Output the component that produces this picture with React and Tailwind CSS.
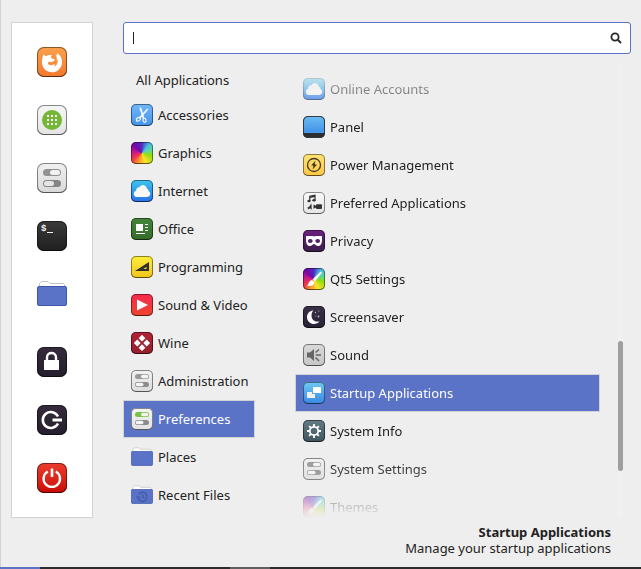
import clsx from "clsx";

const RAINBOW =
  "bg-[conic-gradient(from_0deg,#4f2cc0_0deg,#48bfe0_40deg,#5cd8a0_70deg,#8fdd10_105deg,#ffe32a_160deg,#ff9a28_200deg,#f03a48_235deg,#cc1a88_275deg,#7206a8_315deg,#4f2cc0_360deg)]";

function Tile({ tone, large, children }) {
  return (
    <span
      aria-hidden="true"
      className={clsx(
        "block shrink-0 overflow-hidden shadow-[inset_0_0_0_1px_rgba(0,0,0,0.45),inset_0_-1px_0_0_rgba(0,0,0,0.3)]",
        large ? "size-[30px] rounded-[7px]" : "size-[22px] rounded-[5px]",
        tone
      )}
    >
      <svg viewBox={large ? "0 0 30 30" : "0 0 22 22"} className="size-full" fill="none">
        {children}
      </svg>
    </span>
  );
}

function FolderIcon({ large, recent }) {
  return (
    <svg
      aria-hidden="true"
      viewBox="0 0 30 30"
      fill="none"
      className={clsx("shrink-0", large ? "size-[30px]" : "size-[22px]")}
    >
      <path d="M2.5 8V4.5L4.5 2.5H11L13 4.5H26.5L27.5 5.5V9" fill="#fff" stroke="#c3c3c3" />
      <rect x="0.5" y="7.5" width="29" height="19" rx="1.5" fill="#5a73c6" stroke="#3e57ae" />
      {recent && (
        <g stroke="#4259a8" strokeWidth="1.8">
          <path d="M10.5 14A6.2 6.2 0 1 1 9.600 18.500" />
          <path d="M16 13.500v4l2.500 2" />
          <path d="M7.500 16.500l2.300 2.500 2.700-2" />
        </g>
      )}
    </svg>
  );
}

function Toggles({ top }) {
  return (
    <>
      <rect x="4" y="4" width="14" height="5" rx="2.5" fill={top} />
      <rect x="10" y="4.7" width="7.3" height="3.6" rx="1.8" fill="#f4f4f4" />
      <rect x="4" y="12" width="14" height="5" rx="2.5" fill="#8c8c8c" />
      <rect x="4.7" y="12.7" width="7.8" height="3.6" rx="1.8" fill="#f4f4f4" />
    </>
  );
}

const CLOUD =
  "M6 17C3.8 17 2.8 15.6 2.8 13.8C2.8 12.1 4 11 5.2 10.8C4.8 8.4 6.6 7 8.4 7.2C9.4 5.4 11.3 4.8 13 5.2C15 5.7 15.9 7.2 15.8 8.8C17 8.8 17.6 9.9 17.4 10.9C18.8 11.4 19.3 12.5 19.2 13.8C19.1 15.8 17.8 17 16 17Z";

const Brush = () => (
  <>
    <path d="M17.8 3.5L19 4.7L12 13.2L9.6 11.2Z" fill="#fff" />
    <path d="M9 11.9L11.3 13.9C11.5 16.8 8.5 18.7 4 17.8C5.9 16.8 5.4 12.6 9 11.9Z" fill="#fff" />
  </>
);

const ICONS = {
  accessories: (
    <Tile tone="bg-linear-to-b from-[#71b7fb] to-[#4492ea]">
      <path d="M8.300 3.500L10.200 3.800L13.300 14L11.800 14.500Z" fill="#fff" />
      <path d="M16.500 4.200L17 5.800L9.300 14.500L8 13.500Z" fill="#fff" />
      <ellipse cx="7.300" cy="15.300" rx="2.200" ry="1.600" transform="rotate(-35 7.300 15.300)" stroke="#fff" strokeWidth="1.100" />
      <ellipse cx="13.500" cy="16.300" rx="1.500" ry="2.100" transform="rotate(-15 13.500 16.300)" stroke="#fff" strokeWidth="1.100" />
    </Tile>
  ),
  graphics: <Tile tone={RAINBOW} />,
  internet: (
    <Tile tone="bg-linear-to-b from-[#3ec5ee] to-[#2c6fe9]">
      <path d={CLOUD} fill="#f7f7f7" />
    </Tile>
  ),
  office: (
    <Tile tone="bg-linear-to-b from-[#45853a] to-[#346b2b]">
      <path d="M5 6h7v7H5zM14 6h3v1h-3zM14 9h3v1h-3zM14 12h3v1h-3zM5 15h9v1H5z" fill="#fff" />
    </Tile>
  ),
  programming: (
    <Tile tone="bg-linear-to-b from-[#fdee39] to-[#f0c51e]">
      <path fillRule="evenodd" d="M18 6V15H4ZM15.5 10.8L12.3 12.9H15.5Z" fill="#2f2f2f" />
    </Tile>
  ),
  media: (
    <Tile tone="bg-linear-to-b from-[#f6274f] to-[#ed4528]">
      <path d="M6 5.5L17 11L6 16.5Z" fill="#fff" />
    </Tile>
  ),
  wine: (
    <Tile tone="bg-linear-to-b from-[#b02436] to-[#941f2e]">
      <path
        d="M11 2.8L14.4 6.2L11 9.6L7.6 6.2ZM6.3 7.6L9.7 11L6.3 14.4L2.9 11ZM15.7 7.6L19.1 11L15.7 14.4L12.3 11ZM11 12.3L14.4 15.7L11 19.1L7.6 15.7Z"
        fill="#fff"
      />
    </Tile>
  ),
  admin: (
    <Tile tone="bg-linear-to-b from-[#f2f2f2] to-[#dcdcdc]">
      <Toggles top="#9a9a9a" />
    </Tile>
  ),
  preferences: (
    <Tile tone="bg-linear-to-b from-[#f5f5f5] to-[#e2e2e2]">
      <Toggles top="#79c142" />
    </Tile>
  ),
  places: <FolderIcon />,
  recent: <FolderIcon recent />,
  panel: (
    <Tile tone="bg-linear-to-b from-[#6bbcf2] to-[#3483e5]">
      <path d="M0 17h22v5H0z" fill="#2d2d2d" />
      <path d="M1 16.5h20" stroke="#45a0f5" />
      <rect x="0.5" y="0.5" width="21" height="21" rx="4.5" stroke="#32383f" />
    </Tile>
  ),
  power: (
    <Tile tone="bg-linear-to-b from-[#ffe373] to-[#fdc643]">
      <circle cx="11" cy="11" r="6.5" stroke="#453a22" strokeWidth="1.3" />
      <path d="M12.6 6.5L8.2 11.5H10.6L9.6 15.5L14 10.4H11.5Z" fill="#33301f" />
    </Tile>
  ),
  preferred: (
    <Tile tone="bg-linear-to-b from-[#fafafa] to-[#e4e4e4]">
      <path d="M6.8 9V4.2L12 3.2V8" stroke="#333" strokeWidth="1.2" />
      <path d="M6.8 5.2L12 4.2" stroke="#333" strokeWidth="1.4" />
      <ellipse cx="6" cy="9" rx="1.7" ry="1.3" fill="#333" />
      <ellipse cx="11" cy="8.2" rx="1.7" ry="1.3" fill="#333" />
      <path d="M8.4 11.3L8.8 17.8L7 16.2L5.6 17.5L4.3 15.8L6.3 14.4Z" fill="#333" />
      <rect x="13" y="12.3" width="6" height="4.6" rx="1" fill="#333" />
      <path d="M10.5 12.4L13.3 14L13.3 15.4L10.5 16.8Z" fill="#333" />
    </Tile>
  ),
  privacy: (
    <Tile tone="bg-linear-to-b from-[#6d2181] to-[#3a1d4a]">
      <path
        fillRule="evenodd"
        d="M4 6H9.500L11 6.600L12.500 6H18C18.700 6 19 6.400 19 7V9.500C19 13.500 17.800 16 15.200 16C13 16 12 14 11 14C10 14 9 16 6.800 16C4.200 16 3 13.500 3 9.500V7C3 6.400 3.300 6 4 6ZM7.300 9C5.800 9 5 9.800 5 10.900C5 12 5.900 12.900 7.300 12.900C8.700 12.900 9.600 12 9.600 10.900C9.600 9.800 8.800 9 7.300 9ZM14.700 9C13.200 9 12.400 9.800 12.400 10.900C12.400 12 13.300 12.900 14.700 12.900C16.100 12.900 17 12 17 10.900C17 9.800 16.200 9 14.700 9Z"
        fill="#fff"
      />
    </Tile>
  ),
  brush: (
    <Tile tone={RAINBOW}>
      <Brush />
    </Tile>
  ),
  screensaver: (
    <Tile tone="bg-linear-to-b from-[#3a3048] to-[#292335]">
      <path d="M10.5 4.2C5.8 5 3.8 8.2 4 11.5C4.3 15.5 7.4 18 11 18C13.3 18 15.2 17 16.5 15.3C12 16.3 9 14 8.6 10.5C8.3 8 9 5.6 10.5 4.2Z" fill="#fff" />
      <g fill="#bdb8c8">
        <circle cx="12.5" cy="6.5" r="0.7" />
        <circle cx="15.8" cy="5" r="0.6" />
        <circle cx="15.5" cy="10.5" r="0.9" />
        <circle cx="12.8" cy="10" r="0.5" />
      </g>
    </Tile>
  ),
  sound: (
    <Tile tone="bg-linear-to-b from-[#dadada] to-[#c6c6c6]">
      <path d="M4 8.5H7L11 5V17L7 13.5H4Z" fill="#666" />
      <path d="M12.5 8.5L16 5.5M12.8 11H18M12.5 13.5L16 17" stroke="#666" strokeWidth="1.5" />
    </Tile>
  ),
  startup: (
    <Tile tone="bg-linear-to-b from-[#6fc9f1] to-[#3a87e2]">
      <rect x="10" y="5" width="8" height="6" rx="0.5" fill="#fff" />
      <path d="M4 10H9V12H12V16H4Z" fill="#f0f0f0" />
    </Tile>
  ),
  info: (
    <Tile tone="bg-linear-to-b from-[#647c87] to-[#40555f]">
      <circle cx="11" cy="11" r="4.2" stroke="#fff" strokeWidth="1.8" />
      <path
        d="M11 4V6.600M11 15.400V18M4 11H6.600M15.400 11H18M6.100 6.100L7.900 7.900M14.100 14.100L15.900 15.900M15.900 6.100L14.100 7.900M7.900 14.100L6.100 15.900"
        stroke="#fff"
        strokeWidth="1.8"
      />
    </Tile>
  ),
};

const FAVOURITES = [
  {
    label: "Firefox",
    icon: (
      <Tile large tone="bg-linear-to-b from-[#fba04c] to-[#f4782e]">
        <path
          d="M6.500 7.500L9 9.300C10.500 8 12.800 7.700 15 8L13.800 10C14.500 11.500 16 12.200 17.800 12.300L17.200 14L13.800 15.200L12.500 14.500L10.800 15.800C10.800 17 12 18.300 14 18.200C15.500 18.100 16.300 17 18.300 17.200L17 19.500C19.500 19 21 16 20.600 12.500L19.600 13C20 10.500 19.500 8.800 18.300 7.500L20.200 8.500L20 6C24 8 26 13 24.700 18C23.200 22.500 19.500 25.300 15.200 25.300C9.500 25.300 5 21 5 15.500C5 12.500 5.600 10 6.500 7.500Z"
          fill="#fff"
        />
      </Tile>
    ),
  },
  {
    label: "Software Manager",
    icon: (
      <Tile large tone="bg-linear-to-b from-[#f6f6f6] to-[#e4e4e4]">
        <circle cx="15" cy="15" r="10" fill="#73b734" />
        <path
          d="M10 10h2v2h-2zM14 10h2v2h-2zM18 10h2v2h-2zM10 14h2v2h-2zM14 14h2v2h-2zM18 14h2v2h-2zM10 18h2v2h-2zM14 18h2v2h-2zM18 18h2v2h-2z"
          fill="#fff"
        />
      </Tile>
    ),
  },
  {
    label: "Settings",
    icon: (
      <Tile large tone="bg-linear-to-b from-[#f2f2f2] to-[#d8d8d8]">
        <rect x="6" y="6" width="18" height="7" rx="3.5" fill="#929292" />
        <rect x="13" y="7" width="10" height="5" rx="2.5" fill="#f1f1f1" />
        <rect x="6" y="17" width="18" height="7" rx="3.5" fill="#858585" />
        <rect x="7" y="18" width="10" height="5" rx="2.5" fill="#e6e6e6" />
      </Tile>
    ),
  },
  {
    label: "Terminal",
    icon: (
      <Tile large tone="bg-linear-to-b from-[#3a3a3a] to-[#202020]">
        <text x="4" y="10" fontSize="9" fontWeight="700" fill="#f4f4f4" className="font-['Liberation_Mono',monospace]">
          $
        </text>
        <path d="M10 11.5h6" stroke="#f4f4f4" />
      </Tile>
    ),
  },
  { label: "Files", icon: <FolderIcon large /> },
];

const SESSION = [
  {
    label: "Lock screen",
    icon: (
      <Tile large tone="bg-linear-to-b from-[#352b3c] to-[#251e2c]">
        <path d="M10 14V10.5C10 4.5 19 4.5 19 10.5V14" stroke="#fff" strokeWidth="2.4" />
        <rect x="7" y="13" width="15" height="10" rx="0.5" fill="#fff" />
      </Tile>
    ),
  },
  {
    label: "Log out",
    icon: (
      <Tile large tone="bg-linear-to-b from-[#352b3c] to-[#251e2c]">
        <path d="M21 11.500A8 8 0 1 0 21 18.500" stroke="#fff" strokeWidth="2.6" />
        <path d="M15.500 15H25" stroke="#fff" strokeWidth="2.8" />
      </Tile>
    ),
  },
  {
    label: "Shut down",
    icon: (
      <Tile large tone="bg-linear-to-b from-[#ec3b2d] to-[#c90606]">
        <path d="M10.800 8.500A8.200 8.200 0 1 0 18.800 8.500" stroke="#fff" strokeWidth="2.4" />
        <path d="M15 5.5V14" stroke="#fff" strokeWidth="2.6" />
      </Tile>
    ),
  },
];

const CATEGORIES = [
  ["Accessories", "accessories"],
  ["Graphics", "graphics"],
  ["Internet", "internet"],
  ["Office", "office"],
  ["Programming", "programming"],
  ["Sound & Video", "media"],
  ["Wine", "wine"],
  ["Administration", "admin"],
  ["Preferences", "preferences"],
  ["Places", "places"],
  ["Recent Files", "recent"],
];

const APPLICATIONS = [
  ["Online Accounts", "internet"],
  ["Panel", "panel"],
  ["Power Management", "power"],
  ["Preferred Applications", "preferred"],
  ["Privacy", "privacy"],
  ["Qt5 Settings", "brush"],
  ["Screensaver", "screensaver"],
  ["Sound", "sound"],
  ["Startup Applications", "startup"],
  ["System Info", "info"],
  ["System Settings", "admin"],
  ["Themes", "brush"],
];

function MenuRow({ label, icon, selected }) {
  return (
    <button
      type="button"
      className={clsx(
        "flex h-[38px] w-full shrink-0 items-center gap-[5px] border px-[7px] text-left whitespace-nowrap",
        selected ? "border-[#d3d3d3] bg-[#5a73c6] text-white" : "border-transparent"
      )}
    >
      {ICONS[icon]}
      {label}
    </button>
  );
}

function IconGroup({ items }) {
  return (
    <div className="flex flex-col gap-7">
      {items.map(({ label, icon }) => (
        <button key={label} type="button" aria-label={label} className="block size-[30px]">
          {icon}
        </button>
      ))}
    </div>
  );
}

export default function App() {
  return (
    <div className="flex min-h-screen flex-col bg-[#eeeeee] font-['Noto_Sans',sans-serif] text-[13px] leading-4 text-[#222222]">
      <main className="flex flex-1 flex-col border-l border-[#d3d3d3] px-[10px] pt-[22px]">
        <div className="flex gap-[30px]">
          <nav
            aria-label="Favourites"
            className="flex w-[82px] shrink-0 flex-col items-center justify-between border border-[#d3d3d3] bg-white py-6"
          >
            <IconGroup items={FAVOURITES} />
            <IconGroup items={SESSION} />
          </nav>

          <div className="flex min-w-0 flex-1 flex-col">
            <label className="flex h-8 items-center rounded-[3px] border border-[#5a73c6] bg-white pr-2 pl-[9px]">
              <span className="h-3 w-px bg-[#222222]" />
              <input
                type="text"
                aria-label="Search applications"
                className="min-w-0 flex-1 bg-transparent px-1 caret-transparent outline-none"
              />
              <svg aria-hidden="true" viewBox="0 0 12 12" className="size-3" fill="none" stroke="#2b2b2b">
                <circle cx="5" cy="5" r="3.6" strokeWidth="1.8" />
                <path d="M7.5 7.5L11 11" strokeWidth="2" />
              </svg>
            </label>

            <div className="flex pt-2">
              <div className="flex w-[132px] shrink-0 flex-col pt-0.5">
                <button type="button" className="h-8 px-[13px] text-left whitespace-nowrap">
                  All Applications
                </button>
                {CATEGORIES.map(([label, icon]) => (
                  <MenuRow key={label} label={label} icon={icon} selected={label === "Preferences"} />
                ))}
              </div>

              <div className="ml-10 flex h-[456px] min-w-0 flex-1 flex-col overflow-hidden mask-[linear-gradient(to_bottom,transparent,black_56px,black_calc(100%-56px),transparent)] pt-2">
                {APPLICATIONS.map(([label, icon]) => (
                  <MenuRow
                    key={label}
                    label={label}
                    icon={icon}
                    selected={label === "Startup Applications"}
                  />
                ))}
              </div>

              <div className="mr-2 ml-[18px] flex w-[5px] flex-col justify-end rounded-full bg-[#f0f0f0] pb-[47px]">
                <div className="h-[130px] rounded-full bg-[#9e9e9e]" />
              </div>
            </div>
          </div>
        </div>

        <footer className="pt-1.5 pr-5 pb-2 text-right">
          <p className="font-bold">Startup Applications</p>
          <p>Manage your startup applications</p>
        </footer>
      </main>
      <div className="flex h-0.5 bg-[#2b2b2b]">
        <span className="w-10 bg-[#5a73c6]" />
        <span className="ml-[190px] w-10 bg-[#5f5f5f]" />
      </div>
    </div>
  );
}
